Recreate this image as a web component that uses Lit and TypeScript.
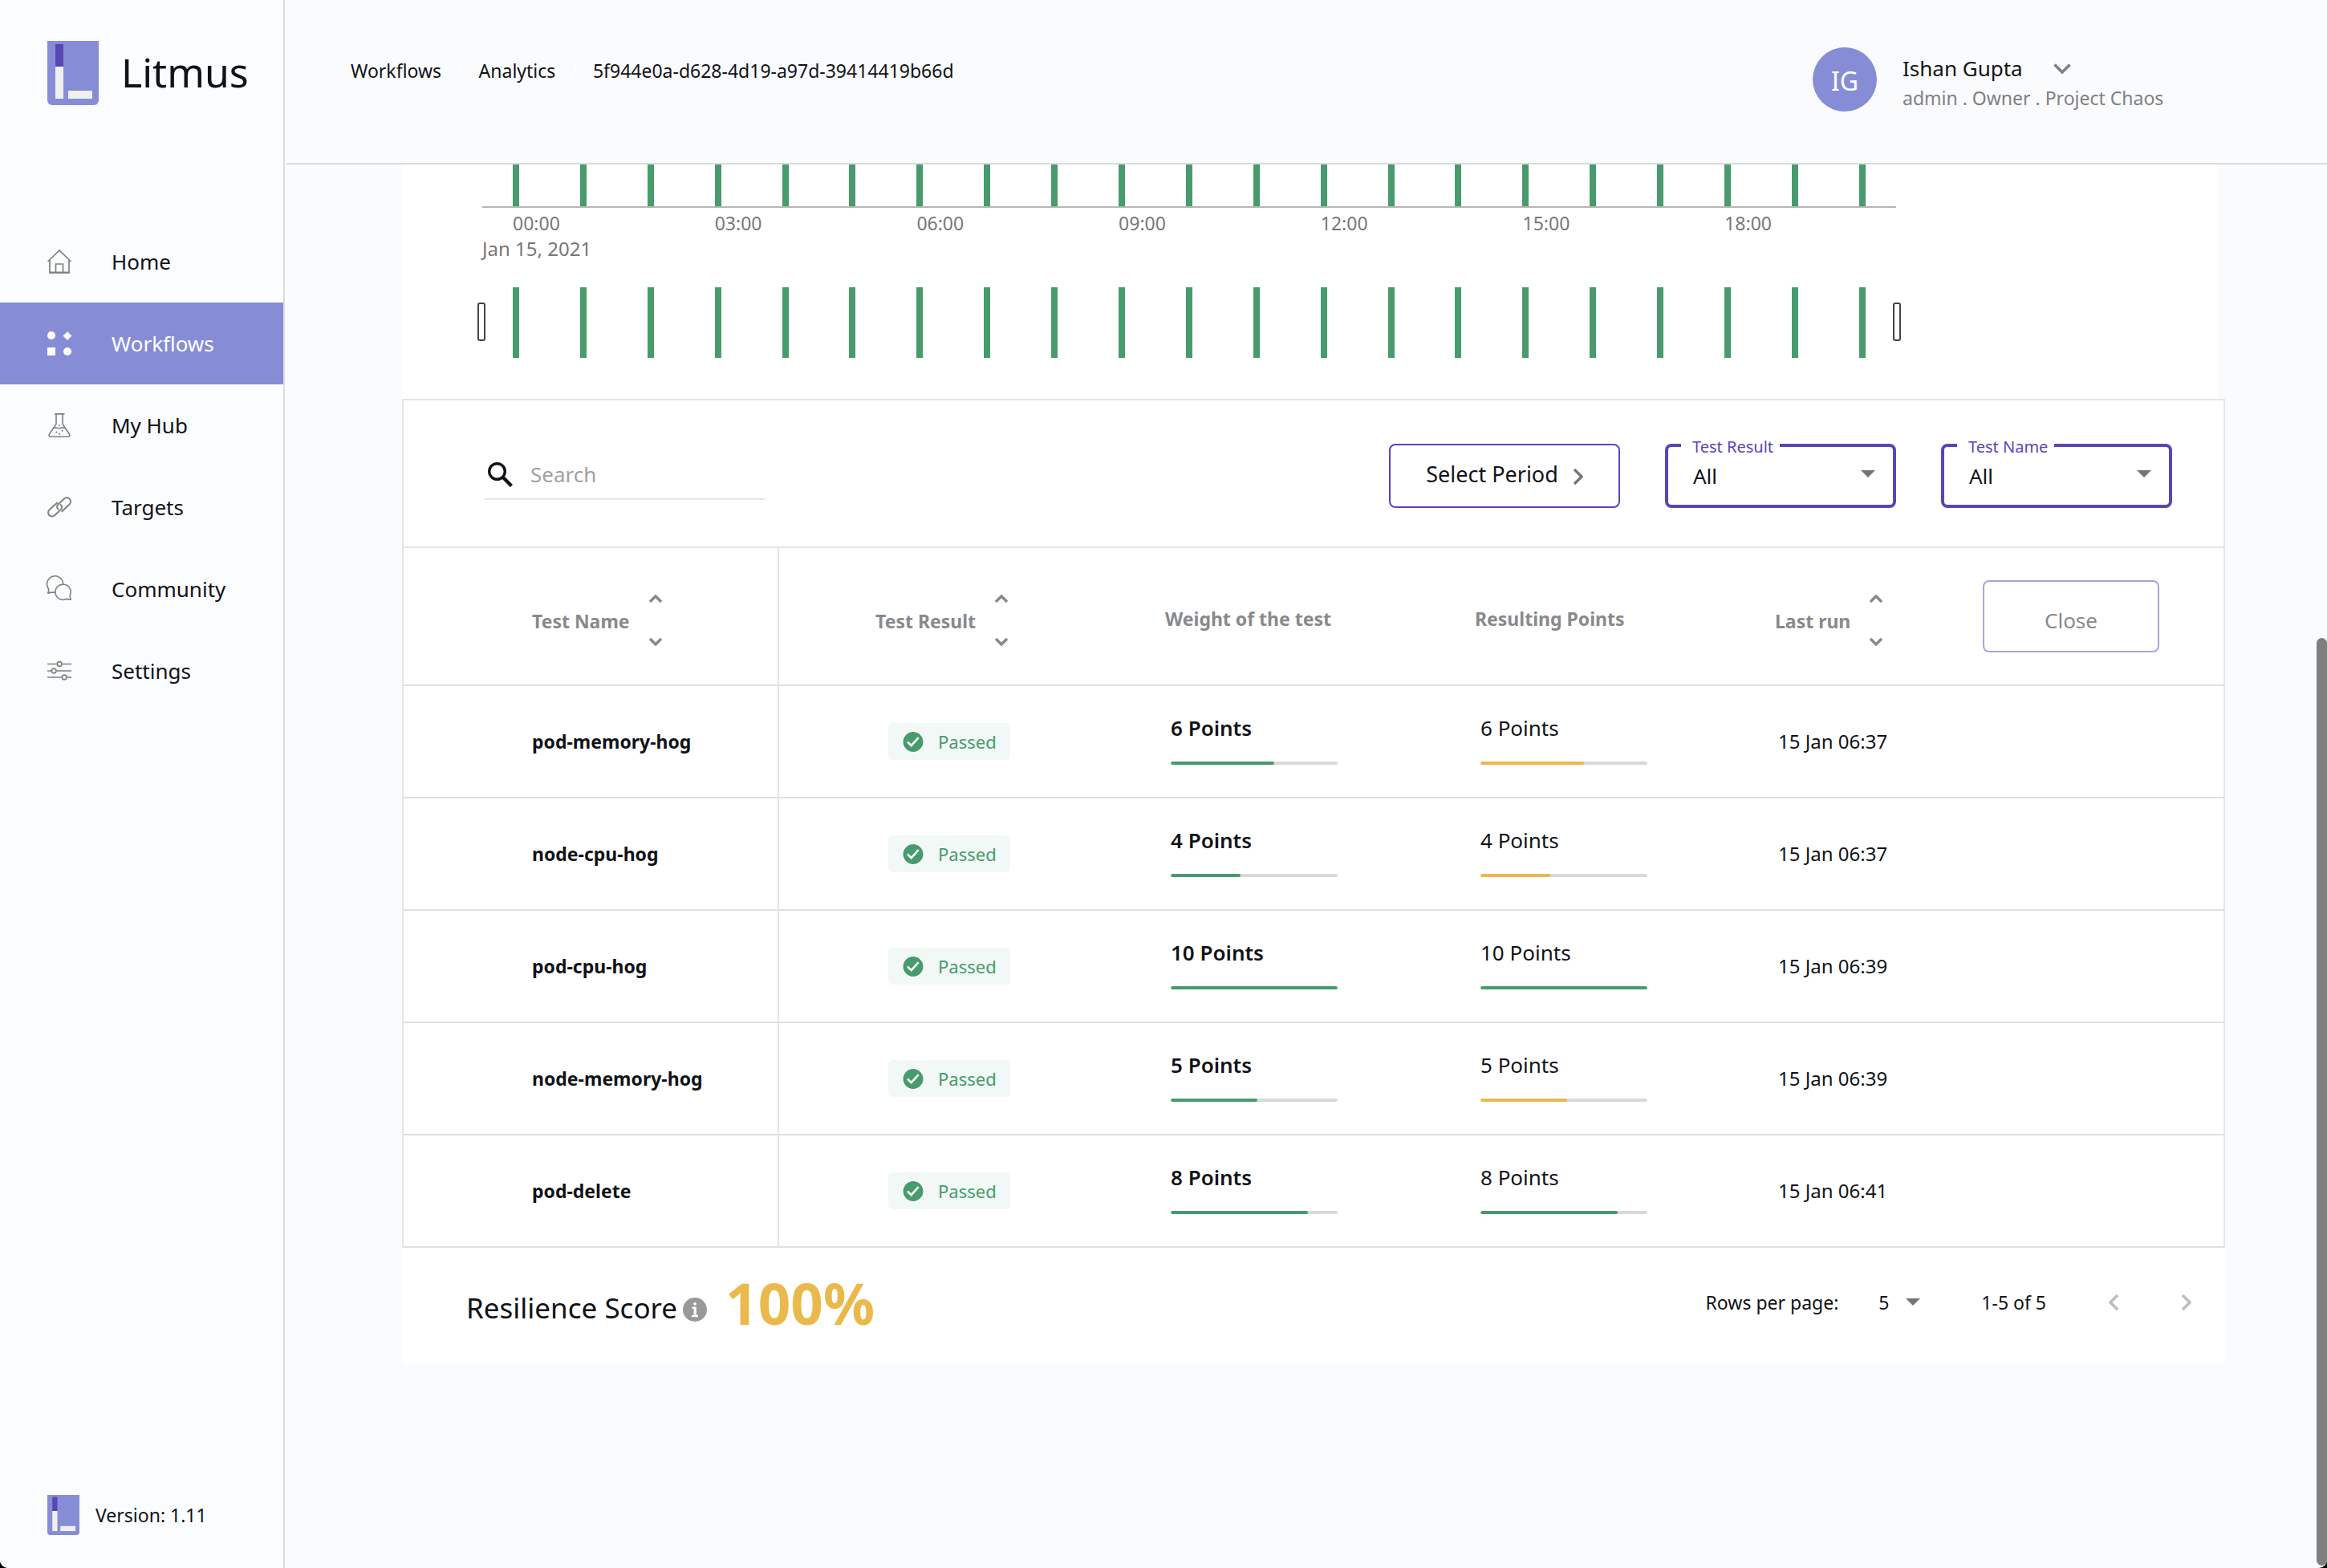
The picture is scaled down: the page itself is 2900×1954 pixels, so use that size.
import { LitElement, html, css, svg } from "lit";
import { customElement, property } from "lit/decorators.js";
import { classMap } from "lit/directives/class-map.js";

interface TestRow {
  name: string;
  points: number;
  fill: number;
  time: string;
}

const ROWS: TestRow[] = [
  { name: "pod-memory-hog", points: 6, fill: 62, time: "15 Jan 06:37" },
  { name: "node-cpu-hog", points: 4, fill: 42, time: "15 Jan 06:37" },
  { name: "pod-cpu-hog", points: 10, fill: 100, time: "15 Jan 06:39" },
  { name: "node-memory-hog", points: 5, fill: 52, time: "15 Jan 06:39" },
  { name: "pod-delete", points: 8, fill: 82, time: "15 Jan 06:41" },
];

const HOURS = ["00:00", "03:00", "06:00", "09:00", "12:00", "15:00", "18:00"];
const RUNS = Array.from({ length: 21 });

const ICONS = {
  home: svg`<g fill="none" stroke="currentColor" stroke-width="1.7"><path d="M0.6 15 15 1l14.4 14"/><path d="M3 13v16h24V13"/><path d="M10.500 29V18h9v11"/><path d="M2.500 28.500h25" stroke-width="2"/></g>`,
  workflows: svg`<g fill="currentColor"><circle cx="5" cy="5" r="5"/><path d="M25 0.200 30.500 5.500 25 11 19.500 5.500Z"/><path d="M0 20h10v10H0z"/><circle cx="25" cy="25" r="5"/></g>`,
  hub: svg`<g fill="none" stroke="currentColor" stroke-width="1.600"><path d="M9 0.900h12.500M11 1v12.500L2.500 26c-1.200 2 0 3.200 1.500 3.200h22c1.500 0 2.700-1.200 1.500-3.200L19 13.500V1"/><path d="M7.500 18.500c3.500-2 5 1.200 8.500 0 2.500-1 4-.8 6 .2"/></g><g fill="currentColor"><circle cx="15" cy="15.300" r="1"/><circle cx="11.500" cy="23.500" r="1.100"/><circle cx="18.700" cy="21.800" r="1.100"/><circle cx="15.200" cy="25.800" r="1.100"/></g>`,
  targets: svg`<g fill="none" stroke="currentColor" stroke-width="2" stroke-linecap="round"><path d="M12.300 9.600 2.600 18.300a4.700 4.700 0 0 0 6.400 7l8-7.400c1.800-1.900 1.700-4.200-.5-5.800"/><path d="M18.300 20.200 27.500 11.500a4.700 4.700 0 0 0-6.500-7l-7.800 7.300c-1.500 1.800-1.500 4.300.3 5.700"/></g>`,
  community: svg`<g fill="none" stroke="currentColor" stroke-width="1.600" stroke-linejoin="round"><path d="M10.500 19.600c-3-1-6.500-.4-9.700.6C2 18 1.800 16 1.400 14.500A10 10 0 1 1 19.600 9"/><path d="M28.400 22.500A9.600 9.600 0 1 0 24 27.300c1.600.9 3.400.9 5.200.9-1-1.800-1.300-3.800-.8-5.700Z"/></g>`,
  settings: svg`<g fill="none" stroke="currentColor" stroke-width="1.700"><path d="M0 6.500h12M18.500 6.500H30M0 15h5M11.500 15H30M0 23h18M24.500 23H30"/><circle cx="15.200" cy="6.500" r="2.800"/><circle cx="8.200" cy="15" r="2.800"/><circle cx="21.200" cy="23" r="2.800"/></g>`,
};

const NAV = [
  { label: "Home", icon: ICONS.home },
  { label: "Workflows", icon: ICONS.workflows, active: true },
  { label: "My Hub", icon: ICONS.hub },
  { label: "Targets", icon: ICONS.targets },
  { label: "Community", icon: ICONS.community },
  { label: "Settings", icon: ICONS.settings },
];

const logo = (width: number, height: number) => html`
  <svg width=${width} height=${height} viewBox="0 0 64 80" aria-hidden="true">
    <path d="M0 0h64v74a6 6 0 0 1-6 6H6a6 6 0 0 1-6-6z" fill="#868dd6" />
    <path d="M10 4h10v28H10z" fill="#5747b5" />
    <path d="M10 32h10v40H10zM26 62h30v10H26z" fill="#f0f0f0" />
  </svg>
`;

const dropArrow = html`
  <svg class="drop-arrow" width="18" height="10" viewBox="0 0 18 10" aria-hidden="true">
    <path d="M0 0h18L9 9z" fill="#757575" />
  </svg>
`;

@customElement("points-meter")
export class PointsMeter extends LitElement {
  @property({ type: Number }) points = 0;
  @property({ type: Number }) fill = 0;
  @property({ type: Boolean }) strong = false;
  @property() tone = "good";

  static styles = css`
    :host {
      display: flex;
      flex-direction: column;
      gap: 24px;
      width: 208px;
      padding-bottom: 6px;
    }
    .text {
      font-size: 26px;
      line-height: 36px;
    }
    .strong {
      font-weight: 600;
    }
    .track {
      height: 4px;
      border-radius: 2px;
      background: #d9d9d9;
      overflow: hidden;
    }
    .bar {
      height: 4px;
      border-radius: 2px;
      background: #479b6c;
    }
    .warn {
      background: #ebb94b;
    }
  `;

  render() {
    return html`
      <span class=${classMap({ text: true, strong: this.strong })}>${this.points} Points</span>
      <div class="track">
        <div
          class=${classMap({ bar: true, warn: this.tone === "warn" })}
          style="width:${this.fill}%"
        ></div>
      </div>
    `;
  }
}

@customElement("app-root")
export class AppRoot extends LitElement {
  static styles = css`
    :host {
      display: block;
      background: #000;
      color: #111217;
      font-family: "Noto Sans", "Open Sans", sans-serif;
      font-size: 23px;
      line-height: 32px;
    }
    * {
      box-sizing: border-box;
    }
    svg {
      display: block;
      flex: none;
    }
    button,
    input,
    select {
      margin: 0;
      padding: 0;
      border: 0;
      background: none;
      color: inherit;
      font: inherit;
    }
    a {
      color: inherit;
      text-decoration: none;
    }
    .page {
      display: flex;
      gap: 2px;
      min-height: 100vh;
      border-radius: 0 0 10px 10px;
      background: #fafbfd;
      overflow: hidden;
      position: relative;
    }

    .sidebar {
      display: flex;
      flex-direction: column;
      flex: none;
      width: 355px;
      border-right: 2px solid #dadbdf;
      background: #fafcfe;
    }
    .brand {
      display: flex;
      align-items: center;
      gap: 28px;
      padding: 51px 0 144px 59px;
      font-size: 50px;
    }
    .brand-name {
      height: 80px;
      line-height: 78px;
    }
    .nav-link {
      display: flex;
      align-items: center;
      gap: 50px;
      height: 102px;
      padding-left: 59px;
      font-size: 26px;
    }
    .nav-link svg {
      color: #808080;
      overflow: visible;
    }
    .nav-link.active {
      background: #868dd6;
      color: #fff;
    }
    .nav-link.active svg {
      color: #fff;
    }
    .version {
      display: flex;
      align-items: center;
      gap: 20px;
      margin-top: auto;
      padding: 0 0 41px 59px;
    }

    .main {
      display: flex;
      flex-direction: column;
      flex: 1;
      min-width: 0;
    }
    .header {
      display: flex;
      justify-content: space-between;
      align-items: flex-start;
      height: 205px;
      padding: 59px 200px 0 80px;
      border-bottom: 2px solid #dadbdf;
    }
    .crumbs {
      display: flex;
      gap: 19px;
      padding-top: 13px;
    }
    .slash {
      color: #fff;
    }
    .user {
      display: flex;
      gap: 32px;
      width: 441px;
    }
    .avatar {
      flex: none;
      width: 80px;
      height: 80px;
      padding-top: 4px;
      border-radius: 50%;
      background: #868dd6;
      color: #fff;
      font-size: 32px;
      line-height: 76px;
      text-align: center;
    }
    .user-text {
      padding-top: 6px;
      white-space: nowrap;
    }
    .user-name {
      display: flex;
      align-items: center;
      gap: 38px;
      font-size: 26px;
      line-height: 40px;
    }
    .user-role {
      color: #808080;
      line-height: 34px;
    }

    .content {
      padding: 0 127px 120px 144px;
    }
    .chart {
      margin-right: 10px;
      padding: 0 400px 51px 100px;
      background: #fff;
      color: #777;
    }
    .runs {
      display: flex;
      justify-content: space-between;
      padding: 0 38px;
    }
    .run {
      width: 8px;
      background: #479b6c;
    }
    .upper {
      height: 52px;
    }
    .brush {
      height: 88px;
      margin-top: 32px;
      position: relative;
    }
    .handle {
      position: absolute;
      top: 19px;
      width: 10px;
      height: 48px;
      border: 2px solid #444;
      border-radius: 3px;
      background: #fff;
    }
    .handle.start {
      left: -6px;
    }
    .handle.end {
      right: -6px;
    }
    .hours {
      display: grid;
      grid-template-columns: repeat(20, 1fr);
      padding: 3px 46px 0 38px;
      border-top: 2px solid #b6b6b6;
    }
    .hour {
      grid-column: span 3;
    }
    .hour:last-child {
      grid-column: span 2;
    }
    .date {
      font-size: 24px;
    }

    .card {
      border: 2px solid #e5e5e5;
      border-bottom: 0;
      background: #fff;
    }
    .toolbar {
      display: flex;
      align-items: flex-end;
      gap: 56px;
      height: 184px;
      padding: 0 64px 48px 100px;
      border-bottom: 2px solid #e5e5e5;
      font-size: 26px;
    }
    .search {
      display: flex;
      align-items: center;
      gap: 22px;
      width: 350px;
      height: 62px;
      margin: 0 auto 10px 0;
      padding-left: 5px;
      border-bottom: 2px solid #e5e5e5;
    }
    .search-input {
      flex: 1;
      min-width: 0;
      height: 40px;
      outline: none;
    }
    .search-input::placeholder {
      color: #a0a0a0;
      opacity: 1;
    }
    .period {
      display: flex;
      align-items: center;
      justify-content: center;
      gap: 18px;
      width: 288px;
      height: 80px;
      padding-bottom: 4px;
      border: 2px solid #5b44ba;
      border-radius: 8px;
      font-size: 27px;
    }
    .period svg {
      margin-top: 6px;
    }
    .filter {
      width: 288px;
      height: 94px;
      margin: 0;
      padding: 0 0 0 16px;
      border: 4px solid #5b44ba;
      border-radius: 8px;
    }
    .filter-title {
      height: 32px;
      padding: 4px 8px 0 14px;
      color: #5b44ba;
      font-size: 20px;
      line-height: 28px;
    }
    .filter-box {
      display: grid;
      align-items: center;
      height: 72px;
      margin-top: -14px;
    }
    .filter-select {
      grid-area: 1 / 1;
      height: 72px;
      padding-left: 15px;
      appearance: none;
      outline: none;
    }
    .filter-box .drop-arrow {
      grid-area: 1 / 1;
      justify-self: end;
      margin: 0 22px 4px 0;
      pointer-events: none;
    }

    .results {
      width: 100%;
      table-layout: fixed;
      border-spacing: 0;
    }
    .c1 { width: 468px; }
    .c2 { width: 421px; }
    .c3 { width: 386px; }
    .c4 { width: 374px; }
    .c5 { width: 259px; }
    .c6 { width: 360px; }
    th,
    td {
      padding: 0 0 0 67px;
      border-bottom: 2px solid #e0e0e0;
      text-align: left;
      vertical-align: middle;
      white-space: nowrap;
    }
    th {
      height: 172px;
      padding: 6px 0 0 60px;
      color: #88898c;
      font-weight: 700;
    }
    td {
      height: 140px;
    }
    th:first-child,
    td:first-child {
      padding-left: 160px;
      border-right: 2px solid #e5e5e5;
    }
    th:nth-child(2) {
      padding-left: 120px;
    }
    td:nth-child(2) {
      padding-left: 136px;
    }
    .time {
      padding-left: 64px;
      font-size: 24px;
    }
    th:last-child {
      padding-top: 0;
    }
    .name {
      font-weight: 700;
    }
    .sort {
      display: flex;
      align-items: center;
      gap: 24px;
      padding-top: 4px;
      font-weight: 700;
    }
    .sort-text {
      padding-top: 2px;
    }
    .close {
      width: 220px;
      height: 90px;
      padding-top: 10px;
      border: 2px solid #ada3dc;
      border-radius: 8px;
      font-size: 26px;
      font-weight: 400;
    }
    .chip {
      display: flex;
      align-items: center;
      gap: 17px;
      width: 152px;
      height: 46px;
      padding-left: 17px;
      border-radius: 6px;
      background: #f1f8f5;
      color: #479b6c;
      font-size: 22px;
    }

    .footer {
      display: flex;
      align-items: center;
      justify-content: space-between;
      height: 144px;
      padding: 0 25px 0 80px;
      background: #fff;
    }
    .score {
      display: flex;
      align-items: center;
      gap: 7px;
      font-size: 35px;
    }
    .score-label {
      padding-top: 6px;
    }
    .score svg {
      margin-top: 10px;
    }
    .score-value {
      height: 88px;
      margin-left: 16px;
      color: #ebb94b;
      font-size: 71px;
      font-weight: 700;
      line-height: 82px;
    }
    .pager {
      display: flex;
      align-items: center;
      padding-bottom: 8px;
    }
    .pager-size {
      display: grid;
      align-items: center;
      width: 64px;
      margin: 0 76px 0 38px;
    }
    .pager-select {
      grid-area: 1 / 1;
      padding-left: 12px;
      appearance: none;
      outline: none;
    }
    .pager-size .drop-arrow {
      grid-area: 1 / 1;
      justify-self: end;
      pointer-events: none;
    }
    .pager-range {
      margin-right: 60px;
    }
    .pager-step {
      display: grid;
      place-items: center;
      width: 48px;
      height: 48px;
    }
    .pager-step + .pager-step {
      margin-left: 42px;
    }
    .scroll-thumb {
      position: absolute;
      right: 0;
      top: 795px;
      bottom: 3px;
      width: 13px;
      border-radius: 7px;
      background: #7f7f7f;
    }
  `;

  private sortHeader(label: string) {
    return html`
      <button class="sort" type="button">
        <span class="sort-text">${label}</span>
        <svg width="16" height="64" viewBox="0 0 16 64" fill="none" stroke="#88898c" stroke-width="3.400" aria-hidden="true">
          <path d="m1 9 7-7 7 7" />
          <path d="m1 55 7 7 7-7" />
        </svg>
      </button>
    `;
  }

  private filter(id: string, label: string) {
    return html`
      <fieldset class="filter">
        <legend class="filter-title"><label for=${id}>${label}</label></legend>
        <div class="filter-box">
          <select class="filter-select" id=${id}>
            <option>All</option>
          </select>
          ${dropArrow}
        </div>
      </fieldset>
    `;
  }

  private row(row: TestRow) {
    return html`
      <tr>
        <td class="name">${row.name}</td>
        <td>
          <span class="chip">
            <svg width="28" height="28" viewBox="0 0 28 28" aria-hidden="true">
              <circle cx="14" cy="14.500" r="13.500" fill="#fff" />
              <circle cx="14" cy="14.500" r="12.500" fill="#479b6c" />
              <path d="m7 14.500 4.700 4.700 9-10" fill="none" stroke="#fff" stroke-width="2.600" />
            </svg>
            Passed
          </span>
        </td>
        <td><points-meter strong .points=${row.points} .fill=${row.fill}></points-meter></td>
        <td>
          <points-meter
            .points=${row.points}
            .fill=${row.fill}
            .tone=${row.points >= 8 ? "good" : "warn"}
          ></points-meter>
        </td>
        <td class="time">${row.time}</td>
        <td></td>
      </tr>
    `;
  }

  render() {
    return html`
      <div class="page">
        <aside class="sidebar">
          <div class="brand">
            ${logo(64, 80)}
            <span class="brand-name">Litmus</span>
          </div>
          <nav>
            ${NAV.map(
              (item) => html`
                <a class=${classMap({ "nav-link": true, active: !!item.active })} href="#">
                  <svg width="30" height="30" viewBox="0 0 30 30" aria-hidden="true">${item.icon}</svg>
                  ${item.label}
                </a>
              `
            )}
          </nav>
          <div class="version">${logo(40, 50)} Version: 1.11</div>
        </aside>

        <div class="main">
          <header class="header">
            <nav class="crumbs">
              <a href="#">Workflows</a>
              <span class="slash">/</span>
              <a href="#">Analytics</a>
              <span class="slash">/</span>
              <a href="#">5f944e0a-d628-4d19-a97d-39414419b66d</a>
            </nav>
            <div class="user">
              <div class="avatar">IG</div>
              <div class="user-text">
                <button class="user-name" type="button">
                  Ishan Gupta
                  <svg width="22" height="14" viewBox="0 0 22 14" fill="none" stroke="#808080" stroke-width="3.600" aria-hidden="true">
                    <path d="m1.500 2.500 9.500 9.500 9.500-9.500" />
                  </svg>
                </button>
                <div class="user-role">admin . Owner . Project Chaos</div>
              </div>
            </div>
          </header>

          <main class="content">
            <section class="chart">
              <div class="runs upper">${RUNS.map(() => html`<span class="run"></span>`)}</div>
              <div class="hours">${HOURS.map((h) => html`<span class="hour">${h}</span>`)}</div>
              <div class="date">Jan 15, 2021</div>
              <div class="runs brush">
                ${RUNS.map(() => html`<span class="run"></span>`)}
                <span class="handle start"></span>
                <span class="handle end"></span>
              </div>
            </section>

            <section class="card">
              <div class="toolbar">
                <label class="search">
                  <svg width="31" height="31" viewBox="0 0 31 31" fill="none" stroke="#111217" aria-label="Search">
                    <circle cx="11.500" cy="11.500" r="9.800" stroke-width="3.400" />
                    <path d="m19 19 10.500 10.500" stroke-width="4.400" />
                  </svg>
                  <input class="search-input" type="text" placeholder="Search" />
                </label>
                <button class="period" type="button">
                  Select Period
                  <svg width="13" height="22" viewBox="0 0 13 22" fill="none" stroke="#777" stroke-width="3.400" aria-hidden="true">
                    <path d="m2 2 9 9-9 9" />
                  </svg>
                </button>
                ${this.filter("test-result", "Test Result")}
                ${this.filter("test-name", "Test Name")}
              </div>

              <table class="results">
                <colgroup>
                  <col class="c1" />
                  <col class="c2" />
                  <col class="c3" />
                  <col class="c4" />
                  <col class="c5" />
                  <col class="c6" />
                </colgroup>
                <thead>
                  <tr>
                    <th>${this.sortHeader("Test Name")}</th>
                    <th>${this.sortHeader("Test Result")}</th>
                    <th>Weight of the test</th>
                    <th>Resulting Points</th>
                    <th>${this.sortHeader("Last run")}</th>
                    <th><button class="close" type="button">Close</button></th>
                  </tr>
                </thead>
                <tbody>
                  ${ROWS.map((row) => this.row(row))}
                </tbody>
              </table>
            </section>

            <footer class="footer">
              <div class="score">
                <span class="score-label">Resilience Score</span>
                <svg width="30" height="30" viewBox="0 0 30 30" aria-hidden="true">
                  <circle cx="15" cy="15" r="15" fill="#999" />
                  <circle cx="15" cy="7.800" r="1.900" fill="#fff" />
                  <path d="M11.500 11.500h5.300v10.300h2.200v2.400h-8v-2.400h2.600v-7.900h-2.100z" fill="#fff" />
                </svg>
                <span class="score-value">100%</span>
              </div>
              <div class="pager">
                <label for="rows-per-page">Rows per page:</label>
                <div class="pager-size">
                  <select class="pager-select" id="rows-per-page">
                    <option>5</option>
                  </select>
                  ${dropArrow}
                </div>
                <span class="pager-range">1-5 of 5</span>
                <button class="pager-step" type="button" aria-label="Previous page">
                  <svg width="13" height="22" viewBox="0 0 13 22" fill="none" stroke="#bdbdbd" stroke-width="3.400">
                    <path d="m11 2-9 9 9 9" />
                  </svg>
                </button>
                <button class="pager-step" type="button" aria-label="Next page">
                  <svg width="13" height="22" viewBox="0 0 13 22" fill="none" stroke="#bdbdbd" stroke-width="3.400">
                    <path d="m2 2 9 9-9 9" />
                  </svg>
                </button>
              </div>
            </footer>
          </main>
        </div>
        <div class="scroll-thumb"></div>
      </div>
    `;
  }
}
